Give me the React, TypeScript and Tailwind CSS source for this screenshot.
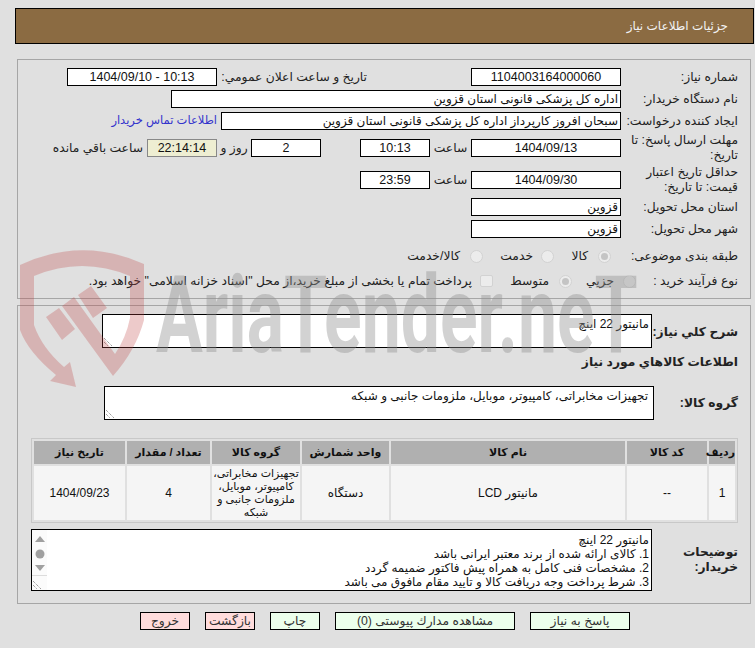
import React from "react";

const box = "h-[18px] shrink-0 border border-black bg-white text-[12px] leading-[16px] text-[#111] overflow-hidden whitespace-nowrap";
const num = "h-[18px] shrink-0 border border-black bg-white text-[12.5px] leading-[16px] text-[#111] overflow-hidden whitespace-nowrap text-center";

function Label({ w, children, bold }: { w: string; children: React.ReactNode; bold?: boolean }) {
  return <div className={`${w} shrink-0 text-[12.3px] leading-[15px] text-[#222] ${bold ? "font-bold" : ""}`}>{children}</div>;
}

function Radio({ on }: { on?: boolean }) {
  return (
    <span className="flex h-[13px] w-[13px] shrink-0 items-center justify-center rounded-full border border-[#d2d2d2] bg-[#ececec]">
      {on ? <span className="h-[7px] w-[7px] rounded-full bg-[#c4c4c4]" /> : null}
    </span>
  );
}

function Grip() {
  return (
    <svg className="absolute bottom-0 left-0" width="10" height="10" viewBox="0 0 10 10">
      <path d="M1 1 L9 9 M1 5 L5 9" stroke="#777" strokeWidth="1" strokeDasharray="1 1" fill="none" />
    </svg>
  );
}

const headers = [
  ["w-[26px]", "رديف"],
  ["w-[80px]", "كد كالا"],
  ["w-[234px]", "نام كالا"],
  ["w-[87px]", "واحد شمارش"],
  ["w-[88px]", "گروه كالا"],
  ["w-[83px]", "تعداد / مقدار"],
  ["w-[91px]", "تاريخ نياز"],
];

function Btn({ w, red, children }: { w: string; red?: boolean; children: React.ReactNode }) {
  return (
    <div className={`${w} flex h-[18px] items-center justify-center whitespace-nowrap border border-black text-[12.3px] text-[#333] ${red ? "bg-[#ffdcdc]" : "bg-[#ecffec]"}`}>
      {children}
    </div>
  );
}

export default function App() {
  return (
    <div dir="rtl" className="relative h-[648px] w-[755px] overflow-hidden bg-[#e0e0e0] pt-[8px] font-['Liberation_Sans','DejaVu_Sans',sans-serif]">
      <div className="ml-[15px] mr-[1px] flex h-[36px] items-center border border-black bg-[#8b6b42] pr-[25px] text-[12px] text-[#f2f2f2]">
        جزئيات اطلاعات نياز
      </div>

      <div className="ml-[17px] mr-[4px] mt-[15px] h-[240px] border border-[#a6a6a6] pr-[12px] pt-[8px]">
        <div className="flex h-[18px] items-center">
          <Label w="w-[117px]">شماره نياز:</Label>
          <div className={`${num} w-[150px]`}>1104003164000060</div>
          <div className="w-[104px] shrink-0" />
          <Label w="w-[150px] whitespace-nowrap">تاريخ و ساعت اعلان عمومي:</Label>
          <div dir="ltr" className={`${num} w-[150px]`}>1404/09/10 - 10:13</div>
        </div>
        <div className="mt-[4px] flex h-[18px] items-center">
          <Label w="w-[117px]">نام دستگاه خريدار:</Label>
          <div className={`${box} w-[450px] pr-[2px]`}>اداره كل پزشكی قانونی استان قزوين</div>
        </div>
        <div className="mt-[4px] flex h-[18px] items-center">
          <Label w="w-[117px] whitespace-nowrap">ايجاد كننده درخواست:</Label>
          <div className={`${box} w-[400px] pr-[2px]`}>سبحان افروز كارپرداز اداره كل پزشكی قانونی استان قزوين</div>
          <div className="mr-[4px] whitespace-nowrap text-[11.5px] text-[#3333cc]">اطلاعات تماس خريدار</div>
        </div>
        <div className="mt-[9px] flex h-[18px] items-center">
          <Label w="w-[117px]">مهلت ارسال پاسخ: تا تاريخ:</Label>
          <div className={`${num} w-[150px]`}>1404/09/13</div>
          <div className="w-[41px] shrink-0 text-center text-[12.3px] text-[#222]">ساعت</div>
          <div className={`${num} w-[70px]`}>10:13</div>
          <div className="w-[39px] shrink-0" />
          <div className={`${num} w-[70px]`}>2</div>
          <div className="w-[34px] shrink-0 text-center text-[12.3px] text-[#222]">روز و</div>
          <div className="h-[18px] w-[70px] shrink-0 border border-[#888] bg-[#eeeed2] text-center text-[12.5px] leading-[16px] text-[#111]">22:14:14</div>
          <div className="mr-[4px] whitespace-nowrap text-[12.3px] text-[#222]">ساعت باقي مانده</div>
        </div>
        <div className="mt-[14px] flex h-[18px] items-center">
          <Label w="w-[117px]">حداقل تاريخ اعتبار قيمت: تا تاريخ:</Label>
          <div className={`${num} w-[150px]`}>1404/09/30</div>
          <div className="w-[41px] shrink-0 text-center text-[12.3px] text-[#222]">ساعت</div>
          <div className={`${num} w-[70px]`}>23:59</div>
        </div>
        <div className="mt-[9px] flex h-[18px] items-center">
          <Label w="w-[117px]">استان محل تحويل:</Label>
          <div className={`${box} w-[150px] pr-[2px]`}>قزوين</div>
        </div>
        <div className="mt-[4px] flex h-[18px] items-center">
          <Label w="w-[117px]">شهر محل تحويل:</Label>
          <div className={`${box} w-[150px] pr-[2px]`}>قزوين</div>
        </div>
        <div className="mt-[9px] flex h-[18px] items-center text-[12.3px] text-[#222]">
          <Label w="w-[127px] whitespace-nowrap">طبقه بندی موضوعی:</Label>
          <Radio on />
          <span className="mr-[10px] w-[34px] shrink-0">كالا</span>
          <Radio />
          <span className="mr-[8px] w-[50px] shrink-0">خدمت</span>
          <Radio />
          <span className="mr-[10px] whitespace-nowrap">كالا/خدمت</span>
        </div>
        <div className="mt-[7px] flex h-[18px] items-center text-[12.3px] text-[#222]">
          <Label w="w-[102px] whitespace-nowrap">نوع فرآيند خريد :</Label>
          <Radio />
          <span className="mr-[9px] w-[42px] shrink-0">جزيي</span>
          <Radio on />
          <span className="mr-[10px] w-[56px] shrink-0">متوسط</span>
          <span className="h-[12px] w-[13px] shrink-0 rounded-[2px] border border-[#d2d2d2] bg-[#ececec]" />
          <span className="mr-[8px] whitespace-nowrap">پرداخت تمام يا بخشی از مبلغ خريد،از محل "اسناد خزانه اسلامی" خواهد بود.</span>
        </div>
      </div>

      <div className="ml-[17px] mr-[4px] mt-[6px] h-[299px] border border-[#a6a6a6] pr-[12px] pt-[8px]">
        <div className="flex items-center">
          <Label w="w-[86px] whitespace-nowrap pt-[3px]" bold>شرح كلي نياز:</Label>
          <div className="relative h-[34px] w-[550px] shrink-0 border border-black bg-white pr-[2px] pt-[1px] text-[12px] leading-[16px] text-[#111]">
            مانيتور 22 اينچ
            <Grip />
          </div>
        </div>
        <div className="mt-[6px] text-[12.3px] font-bold leading-[16px] text-[#222]">اطلاعات كالاهاي مورد نياز</div>
        <div className="mt-[16px] flex items-center">
          <Label w="w-[84px]" bold>گروه كالا:</Label>
          <div className="relative h-[34px] w-[550px] shrink-0 border border-black bg-white pr-[5px] pt-[1px] text-[12px] leading-[16px] text-[#111]">
            تجهيزات مخابراتی، كامپيوتر، موبايل، ملزومات جانبی و شبكه
            <Grip />
          </div>
        </div>

        <table className="mt-[18px] w-[707px] table-fixed border-separate border-spacing-[2px] border border-[#c8c8c8] text-center text-[12px] text-[#111]">
          <thead>
            <tr>
              {headers.map(([w, t]) => (
                <th key={t} className={`${w} h-[23px] whitespace-nowrap bg-[#b0b0b0] p-0 text-[11px] font-bold text-[#111]`}>{t}</th>
              ))}
            </tr>
          </thead>
          <tbody>
            <tr className="bg-[#f5f5f5]">
              <td className="h-[54px] p-0">1</td>
              <td className="p-0">--</td>
              <td className="p-0">مانيتور LCD</td>
              <td className="p-0">دستگاه</td>
              <td className="whitespace-nowrap p-0 text-[11px] leading-[13px]">
                تجهيزات مخابراتی،
                <br />
                كامپيوتر، موبايل،
                <br />
                ملزومات جانبی و
                <br />
                شبكه
              </td>
              <td className="p-0">4</td>
              <td className="p-0">1404/09/23</td>
            </tr>
          </tbody>
        </table>

        <div className="mt-[6px] flex items-center">
          <Label w="w-[86px]" bold>توضيحات خريدار:</Label>
          <div className="relative flex h-[62px] w-[621px] shrink-0 border border-black bg-white text-[12px] leading-[14px] text-[#111]">
            <div className="min-w-0 flex-1 whitespace-nowrap pr-[2px] pt-[3px]">
              <div>مانيتور 22 اينچ</div>
              <div>1. كالای ارائه شده از برند معتبر ايرانی باشد</div>
              <div>2. مشخصات فنی كامل به همراه پيش فاكتور ضميمه گردد</div>
              <div>3. شرط پرداخت وجه دريافت كالا و تاييد مقام مافوق می باشد</div>
            </div>
            <div className="relative flex w-[15px] shrink-0 flex-col items-center bg-[#fbfbfb] pt-[6px]">
              <svg width="10" height="38" viewBox="0 0 10 38">
                <path d="M5 0 L10 6 L0 6 Z" fill="#a0a0a0" />
                <circle cx="5" cy="18" r="4.5" fill="#a0a0a0" />
                <path d="M0 29 L10 29 L5 35 Z" fill="#a0a0a0" />
              </svg>
              <div className="absolute bottom-[14px] left-0 right-0 h-px bg-[#dcdcdc]" />
              <Grip />
            </div>
          </div>
        </div>
      </div>

      <div className="mt-[8px] flex gap-[15px] pr-[125px]">
        <Btn w="w-[100px]">پاسخ به نياز</Btn>
        <Btn w="w-[180px]">مشاهده مدارك پيوستی (0)</Btn>
        <Btn w="w-[50px]">چاپ</Btn>
        <Btn w="w-[50px]" red>بازگشت</Btn>
        <Btn w="w-[50px]" red>خروج</Btn>
      </div>

      <div dir="ltr" className="pointer-events-none absolute left-0 top-0 z-20 h-[648px] w-[755px]">
        <svg className="absolute left-[18px] top-[248px]" width="130" height="142" viewBox="18 248 130 142">
          <path d="M20 265 Q82 236 144 264 L144 320 Q136 350 113 376 L62 306 L74 297 L115 354 Q126 338 130 318 L130 276 Q82 256 34 276 L34 325 Q42 348 64 367 L70 362 L76 387 L50 381 L56 375 Q28 352 20 330 Z" fill="#c04040" fillOpacity="0.28" />
          <path d="M46 317 L59 308 L75 329 L62 340 Z M78 295 L91 286 L107 308 L93 318 Z" fill="#c04040" fillOpacity="0.28" />
        </svg>
        <div className="absolute left-[156px] top-[250px] origin-left scale-x-[0.645] whitespace-nowrap font-['Roboto',sans-serif] text-[108px] font-bold leading-[130px] text-[#909090] opacity-40">
          AriaTender.neT
        </div>
      </div>
    </div>
  );
}
